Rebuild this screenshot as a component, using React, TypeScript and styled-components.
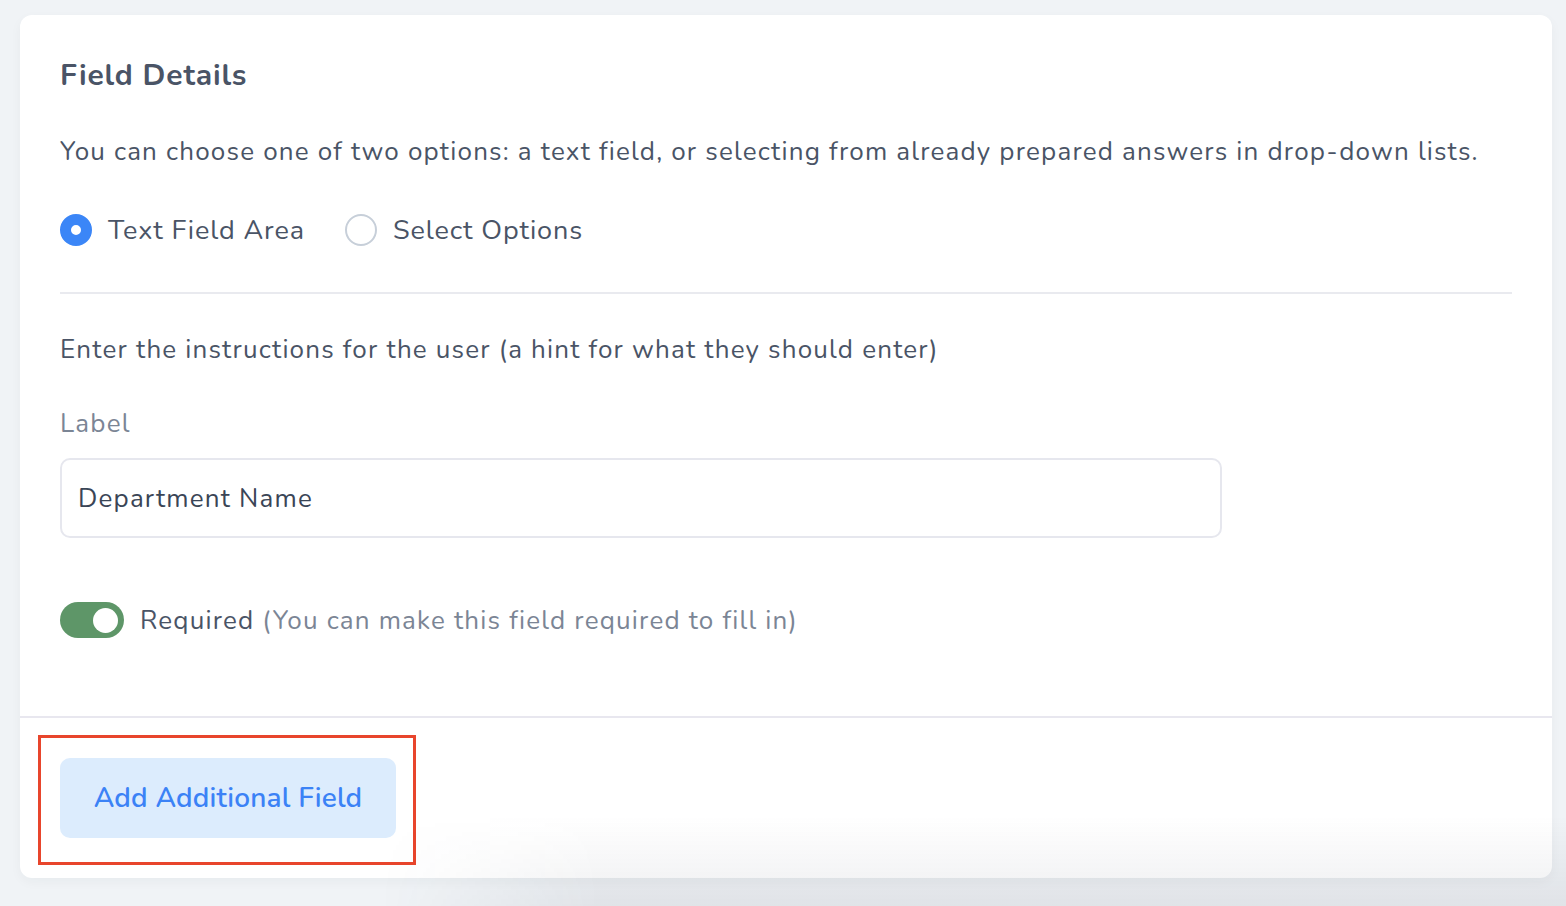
import React from "react";
import styled, { createGlobalStyle } from "styled-components";

const GlobalStyle = createGlobalStyle`
  html, body {
    margin: 0;
    padding: 0;
    background: #f0f3f6;
    font-family: "Nunito", "Lato", "Noto Sans", sans-serif;
    -webkit-font-smoothing: antialiased;
  }
  * {
    box-sizing: border-box;
  }
`;

const Page = styled.div`
  min-height: 906px;
  padding: 15px 14px 28px 20px;
  position: relative;
  overflow: hidden;
`;

const Card = styled.section`
  background: #fff;
  border-radius: 12px;
  box-shadow: 0 4px 12px rgba(30, 41, 59, 0.04);
  overflow: hidden;
`;

const Body = styled.div`
  padding: 43px 40px 78px;
  border-bottom: 2px solid #e8e7ef;
`;

const Title = styled.h2`
  margin: 0;
  font-size: 30px;
  line-height: 36px;
  font-weight: 700;
  letter-spacing: 0.85px;
  color: #4a5466;
`;

const Text = styled.p<{ $top: number; $muted?: boolean }>`
  margin: ${(p) => p.$top}px 0 0;
  font-size: 26px;
  line-height: 36px;
  letter-spacing: 1.2px;
  color: ${(p) => (p.$muted ? "#7b8595" : "#4a5466")};
`;

const RadioGroup = styled.div`
  display: flex;
  align-items: center;
  gap: 40px;
  margin-top: 42px;
  height: 36px;
`;

const RadioOption = styled.label`
  display: flex;
  align-items: center;
  gap: 16px;
  font-size: 27px;
  letter-spacing: 0.9px;
  color: #4a5466;
  cursor: pointer;
`;

const RadioDot = styled.span<{ $checked?: boolean }>`
  width: 32px;
  height: 32px;
  border-radius: 50%;
  background: #fff;
  border: ${(p) => (p.$checked ? "11px solid #3b86f7" : "2px solid #c7cfd9")};
  flex-shrink: 0;
`;

const Divider = styled.hr`
  margin: 44px 0 0;
  border: none;
  height: 2px;
  background: #e9eaef;
`;

const Input = styled.input`
  display: block;
  margin-top: 16px;
  width: 1162px;
  height: 80px;
  padding: 0 16px;
  border: 2px solid #e6e7ee;
  border-radius: 10px;
  font-family: inherit;
  font-size: 26px;
  letter-spacing: 1.2px;
  color: #3a4556;
  outline: none;
  background: #fff;
`;

const ToggleRow = styled.div`
  display: flex;
  align-items: center;
  gap: 16px;
  margin-top: 64px;
  height: 36px;
  font-size: 26px;
  letter-spacing: 1.2px;
  color: #4a5466;
`;

const Toggle = styled.span<{ $on?: boolean }>`
  display: flex;
  align-items: center;
  justify-content: ${(p) => (p.$on ? "flex-end" : "flex-start")};
  width: 64px;
  height: 36px;
  padding: 0 6px;
  border-radius: 18px;
  background: ${(p) => (p.$on ? "#5e9668" : "#d3d8df")};
  flex-shrink: 0;
`;

const Knob = styled.span`
  width: 25px;
  height: 25px;
  border-radius: 50%;
  background: #fff;
`;

const Hint = styled.span`
  color: #7b8595;
`;

const Footer = styled.div`
  padding: 40px 40px 40px;
`;

const Highlight = styled.div`
  position: relative;
  display: inline-block;

  &::after {
    content: "";
    position: absolute;
    top: -23px;
    left: -22px;
    right: -20px;
    bottom: -27px;
    border: 3px solid #e8452c;
    pointer-events: none;
  }
`;

const Button = styled.button`
  display: block;
  width: 336px;
  height: 80px;
  border: none;
  border-radius: 10px;
  background: #dcecfd;
  color: #3b82f6;
  font-family: inherit;
  font-size: 28px;
  font-weight: 600;
  letter-spacing: 0.2px;
  cursor: pointer;
`;

const BottomShade = styled.div`
  position: absolute;
  left: 380px;
  right: 0;
  bottom: 0;
  height: 90px;
  pointer-events: none;
  background: linear-gradient(to bottom, rgba(0, 0, 0, 0), rgba(40, 50, 70, 0.08));
  -webkit-mask-image: linear-gradient(to right, transparent, #000 220px);
  mask-image: linear-gradient(to right, transparent, #000 220px);
`;

const App = () => {
  return (
    <>
      <GlobalStyle />
      <Page>
        <Card>
          <Body>
            <Title>Field Details</Title>
            <Text $top={40}>
              You can choose one of two options: a text field, or selecting from already prepared answers in
              drop-down lists.
            </Text>
            <RadioGroup>
              <RadioOption>
                <RadioDot $checked />
                Text Field Area
              </RadioOption>
              <RadioOption>
                <RadioDot />
                Select Options
              </RadioOption>
            </RadioGroup>
            <Divider />
            <Text $top={38}>Enter the instructions for the user (a hint for what they should enter)</Text>
            <Text $top={38} $muted>
              Label
            </Text>
            <Input defaultValue="Department Name" />
            <ToggleRow>
              <Toggle $on>
                <Knob />
              </Toggle>
              <span>
                Required <Hint>(You can make this field required to fill in)</Hint>
              </span>
            </ToggleRow>
          </Body>
          <Footer>
            <Highlight>
              <Button>Add Additional Field</Button>
            </Highlight>
          </Footer>
        </Card>
        <BottomShade />
      </Page>
    </>
  );
};

export default App;
